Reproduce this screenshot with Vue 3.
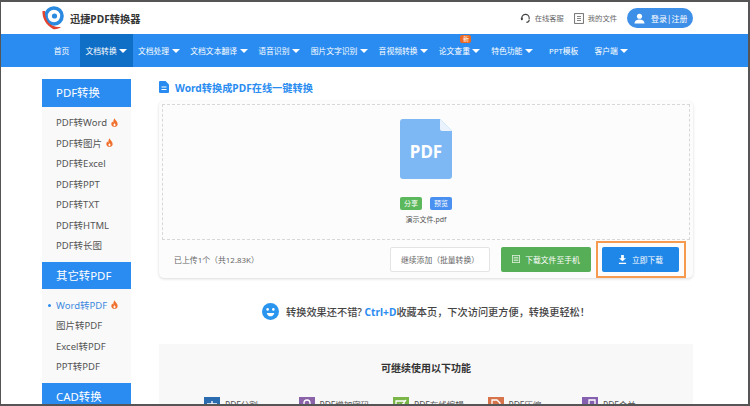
<template>
  <div class="page">
    <!-- шапка -->
    <header class="top">
      <svg class="logo" viewBox="0 0 24 24" width="24" height="24">
        <circle cx="13" cy="10" r="8" fill="none" stroke="#2a8ae0" stroke-width="3.6" />
        <circle cx="13.5" cy="10" r="2.6" fill="#2a8ae0" />
        <path d="M1.5 5C1 12 5 19 12 23c3 .6 6-.4 8-2-5 .6-10-1-13-5C5 13 3.500 9 4 5z" fill="#e2432f" />
      </svg>
      <span class="brand">迅捷PDF转换器</span>
      <div class="top-right">
        <span class="top-link">
          <svg viewBox="0 0 12 12" width="11" height="11">
            <path d="M2 7V5.500a4 4 0 0 1 8 0V7M10 7.500c0 1.500-1.200 2.500-3 2.700" fill="none" stroke="#444" stroke-width="1.200" />
            <rect x="1" y="5" width="2" height="3" rx=".8" fill="#444" />
          </svg>
          在线客服
        </span>
        <span class="top-link">
          <svg viewBox="0 0 10 11" width="10" height="11">
            <rect x=".6" y=".6" width="8.800" height="9.800" fill="none" stroke="#666" stroke-width=".9" />
            <path d="M3 3.500h4M3 5.500h4M3 7.500h4" stroke="#666" stroke-width=".8" />
          </svg>
          我的文件
        </span>
        <span class="login">
          <svg viewBox="0 0 12 12" width="11" height="11">
            <circle cx="6" cy="3.500" r="2.800" fill="#fff" />
            <path d="M.5 11.500c0-3 2.500-4.500 5.500-4.500s5.500 1.500 5.500 4.500z" fill="#fff" />
          </svg>
          登录|注册
        </span>
      </div>
    </header>

    <!-- меню -->
    <nav class="nav">
      <span
        v-for="item in navItems"
        :key="item.label"
        class="nav-item"
        :class="{ active: item.active, plain: !item.arrow }"
      >
        {{ item.label }}
        <i v-if="item.arrow" class="arrow"></i>
        <em v-if="item.badge" class="badge">{{ item.badge }}</em>
      </span>
    </nav>

    <div class="content">
      <aside class="side">
        <section v-for="group in groups" :key="group.title">
          <h3>{{ group.title }}</h3>
          <ul v-if="group.items.length">
            <li v-for="it in group.items" :key="it.label" :class="{ current: it.current }">
              {{ it.label }}
              <svg v-if="it.hot" class="fire" viewBox="0 0 10 12" width="7" height="9">
                <path d="M5 0c.5 2.500 4.500 4.500 4.500 8A4.500 4 0 0 1 .5 8c0-1.500.7-2.800 1.600-3.600.2 1 .7 1.600 1.200 1.800C3.200 4 3.800 1.500 5 0z" fill="#f0702e" />
                <path d="M5 7c.8.8 1.500 1.500 1.500 2.500a1.500 1.500 0 0 1-3 0C3.500 8.500 4.300 7.800 5 7z" fill="#fff" />
              </svg>
            </li>
          </ul>
        </section>
      </aside>

      <main class="main">
        <div class="title">
          <svg viewBox="0 0 10 12" width="10" height="12">
            <path d="M0 1a1 1 0 0 1 1-1h5.500L10 3.500V11a1 1 0 0 1-1 1H1a1 1 0 0 1-1-1z" fill="#2a8cf0" />
            <path d="M2.500 6h5M2.500 8.500h5" stroke="#fff" stroke-width="1.200" />
          </svg>
          Word转换成PDF在线一键转换
        </div>

        <div class="card">
          <div class="drop">
            <div class="file-icon">
              <svg viewBox="0 0 52 60" width="52" height="60">
                <path d="M3 0h37l12 12v45a3 3 0 0 1-3 3H3a3 3 0 0 1-3-3V3a3 3 0 0 1 3-3z" fill="#7db8f5" />
                <path d="M40 0l12 12H42a2 2 0 0 1-2-2z" fill="#eaf3fd" />
              </svg>
              <span class="pdf-text">PDF</span>
            </div>
            <div class="tags">
              <span class="tag green">分享</span>
              <span class="tag blue">预览</span>
            </div>
            <div class="file-name">演示文件.pdf</div>
          </div>
          <div class="bar">
            <span class="count">已上传1个（共12.83K）</span>
            <button class="btn ghost">继续添加（批量转换）</button>
            <button class="btn phone">
              <svg viewBox="0 0 10 10" width="8" height="8">
                <rect x=".5" y=".5" width="9" height="9" fill="none" stroke="#dff0dc" />
                <path d="M2 3h6M2 5h6M2 7h6" stroke="#dff0dc" />
              </svg>
              下载文件至手机
            </button>
            <div class="mark">
              <button class="btn download">
                <svg viewBox="0 0 10 10" width="9" height="9">
                  <path d="M3.500 0h3v3.500H9L5 7 1 3.500h2.500zM1 8.500h8V10H1z" fill="#fff" />
                </svg>
                立即下载
              </button>
            </div>
          </div>
        </div>

        <div class="tip">
          <svg viewBox="0 0 16 16" width="17" height="17">
            <circle cx="8" cy="8" r="8" fill="#2a95ee" />
            <circle cx="5.300" cy="6" r="1.200" fill="#fff" />
            <circle cx="10.700" cy="6" r="1.200" fill="#fff" />
            <path d="M4.500 9.300h7c-.4 2-1.800 3.200-3.500 3.200S4.900 11.300 4.500 9.300z" fill="#fff" />
          </svg>
          <span>转换效果还不错? <b>Ctrl+D</b>收藏本页，下次访问更方便，转换更轻松！</span>
        </div>

        <div class="more">
          <h4>可继续使用以下功能</h4>
          <div class="tools">
            <span v-for="tool in tools" :key="tool.label" class="tool">
              <i class="tool-icon" :style="{ background: tool.color }">
                <svg viewBox="0 0 16 16" width="16" height="16">
                  <path :d="tool.path" fill="none" stroke="#fff" stroke-width="1.300" />
                </svg>
              </i>
              {{ tool.label }}
            </span>
          </div>
        </div>
      </main>
    </div>
  </div>
</template>

<script setup>
const navItems = [
  { label: '首页' },
  { label: '文档转换', arrow: true, active: true },
  { label: '文档处理', arrow: true },
  { label: '文档文本翻译', arrow: true },
  { label: '语音识别', arrow: true },
  { label: '图片文字识别', arrow: true },
  { label: '音视频转换', arrow: true },
  { label: '论文查重', arrow: true, badge: '新' },
  { label: '特色功能', arrow: true },
  { label: 'PPT模板' },
  { label: '客户端', arrow: true }
];

const groups = [
  {
    title: 'PDF转换',
    items: [
      { label: 'PDF转Word', hot: true },
      { label: 'PDF转图片', hot: true },
      { label: 'PDF转Excel' },
      { label: 'PDF转PPT' },
      { label: 'PDF转TXT' },
      { label: 'PDF转HTML' },
      { label: 'PDF转长图' }
    ]
  },
  {
    title: '其它转PDF',
    items: [
      { label: 'Word转PDF', hot: true, current: true },
      { label: '图片转PDF' },
      { label: 'Excel转PDF' },
      { label: 'PPT转PDF' }
    ]
  },
  { title: 'CAD转换', items: [] }
];

const tools = [
  { label: 'PDF分割', color: '#2b6cb0', path: 'M3 7h4v4M13 7H9v4M8 4v10' },
  { label: 'PDF增加密码', color: '#8a63a8', path: 'M5 8V6a3 3 0 0 1 6 0v2M5 8h6v4H5z' },
  { label: 'PDF在线编辑', color: '#7ab648', path: 'M3 4h8v8H3zM6 7l2 2 5-6' },
  { label: 'PDF压缩', color: '#d8744c', path: 'M4 3h5l3 3v7H4z' },
  { label: 'PDF合并', color: '#8660b0', path: 'M7 3h6v6H7zM3 7v6h6' }
];
</script>

<style>
html, body { margin: 0; overflow: hidden; background: #fff; }
</style>

<style scoped>
.page {
  box-sizing: border-box;
  width: 750px;
  height: 406px;
  overflow: hidden;
  border-style: solid;
  border-color: #555;
  border-width: 2px 2px 2px 1px;
  font-family: "Noto Sans", "Noto Sans CJK SC", sans-serif;
  color: #444;
}

.top {
  height: 32px;
  display: flex;
  align-items: center;
  padding-left: 40px;
}
.logo { margin-right: 5px; }
.brand { font-size: 10.2px; font-weight: 700; color: #333; }
.top-right {
  margin-left: auto;
  margin-right: 55px;
  display: flex;
  align-items: center;
}
.top-link {
  display: flex;
  align-items: center;
  gap: 4px;
  font-size: 7.3px;
  color: #666;
  margin-right: 10px;
}
.login {
  display: flex;
  align-items: center;
  gap: 6px;
  width: 66px;
  height: 20px;
  box-sizing: border-box;
  padding-left: 7px;
  border-radius: 10px;
  background: #3d8fe8;
  color: #fff;
  font-size: 8px;
  white-space: nowrap;
}

.nav {
  height: 33px;
  background: #2a8cf0;
  display: flex;
  align-items: stretch;
  padding-left: 42px;
  color: #fff;
  font-size: 7.800px;
}
.nav-item {
  position: relative;
  display: flex;
  align-items: center;
  gap: 2.500px;
  padding: 0 5.350px;
  white-space: nowrap;
}
.nav-item.plain { padding: 0 10.800px; }
.nav-item.active { background: #0f6fc6; }
.arrow {
  width: 0;
  height: 0;
  border-left: 4px solid transparent;
  border-right: 4px solid transparent;
  border-top: 4.500px solid #fff;
}
.badge {
  position: absolute;
  top: 1px;
  left: 27px;
  width: 11px;
  height: 8px;
  line-height: 8px;
  text-align: center;
  border-radius: 2px;
  background: #ee6a22;
  font-size: 6px;
  font-style: normal;
}

.content {
  display: flex;
  align-items: flex-start;
  padding: 12px 0 0 41px;
}

.side { width: 89px; flex: none; background: #f9f9f9; }
.side h3 {
  margin: 0;
  height: 27.500px;
  line-height: 27px;
  padding-left: 14px;
  background: #2a8cf0;
  color: #fff;
  font-size: 11.400px;
  font-weight: 400;
}
.side ul { list-style: none; margin: 0; padding: 5.500px 0 6px; }
.side li {
  position: relative;
  display: flex;
  align-items: center;
  gap: 4px;
  height: 20.500px;
  padding-left: 14px;
  font-size: 9.500px;
  color: #555;
}
.side li.current { color: #3f8be0; }
.side li.current::before {
  content: "";
  position: absolute;
  left: 6px;
  top: 9px;
  width: 3px;
  height: 3px;
  border-radius: 50%;
  background: #2a8cf0;
}

.main { width: 534px; margin-left: 28px; }
.title {
  display: flex;
  align-items: center;
  gap: 6px;
  height: 16px;
  margin-bottom: 6px;
  color: #2a8cf0;
  font-size: 10.200px;
  font-weight: 700;
}

.card {
  background: #fcfcfc;
  border-radius: 5px;
  box-shadow: 0 1px 3px rgba(0, 0, 0, 0.15);
  padding: 3px 3px 0;
  height: 177px;
  box-sizing: border-box;
}
.drop {
  height: 136px;
  box-sizing: border-box;
  border: 1px dashed #d8d8d8;
  display: flex;
  flex-direction: column;
  align-items: center;
  padding-top: 14px;
}
.file-icon { position: relative; width: 52px; height: 60px; }
.pdf-text {
  position: absolute;
  left: 0;
  right: 0;
  top: 21px;
  text-align: center;
  color: #fff;
  font-size: 17px;
  font-weight: 700;
  line-height: 24px;
}
.tags { display: flex; gap: 8px; margin-top: 18px; }
.tag {
  width: 22px;
  height: 13px;
  line-height: 13px;
  border-radius: 2px;
  text-align: center;
  font-size: 7px;
  color: #fff;
}
.tag.green { background: #5cb85c; }
.tag.blue { background: #4a90f0; }
.file-name { margin-top: 4px; font-size: 7px; color: #555; line-height: 12px; }

.bar {
  height: 38px;
  display: flex;
  align-items: center;
  padding-left: 12px;
}
.count { font-size: 7.900px; color: #666; }
.btn {
  height: 25px;
  border-radius: 2px;
  border: none;
  font: inherit;
  font-size: 7.800px;
  display: flex;
  align-items: center;
  justify-content: center;
  gap: 5px;
  padding: 0;
}
.ghost {
  margin-left: auto;
  width: 100px;
  background: #fff;
  border: 1px solid #e4e4e4;
  color: #666;
}
.phone { width: 90px; margin-left: 11px; background: #56ae57; color: #fff; }
.mark {
  box-sizing: border-box;
  width: 90px;
  height: 37px;
  margin: 0 4px 0 5px;
  border: 2px solid #f59a4e;
  padding: 4px;
}
.download { width: 77px; background: #1f87e8; color: #fff; }

.tip {
  display: flex;
  align-items: center;
  justify-content: center;
  gap: 7px;
  height: 66px;
  font-size: 10.200px;
  font-weight: 500;
  color: #444;
}
.tip b { color: #2a8cf0; font-weight: 700; }

.more { background: #f8f8f8; height: 60px; }
.more h4 {
  margin: 0;
  padding-top: 16px;
  line-height: 17px;
  text-align: center;
  font-size: 10px;
  font-weight: 700;
  color: #333;
}
.tools {
  display: flex;
  padding: 20px 0 0 45px;
}
.tool {
  display: flex;
  align-items: flex-start;
  gap: 5px;
  width: 94.500px;
  font-size: 8.500px;
  color: #555;
  white-space: nowrap;
  line-height: 16px;
}
.tool-icon { display: block; width: 16px; height: 16px; }
.tool-icon svg { display: block; }
</style>
